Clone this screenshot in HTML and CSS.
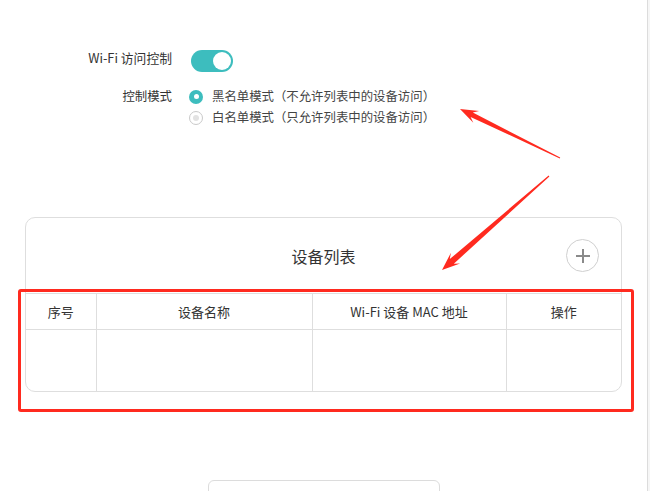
FILE: index.html
```html
<!DOCTYPE html>
<html lang="zh-CN">
<head>
<meta charset="utf-8">
<title>Wi-Fi 访问控制</title>
<link rel="stylesheet" href="styles.css">
</head>
<body>
<div class="page">
  <div class="form">
    <div class="row row-switch">
      <div class="label label-top">Wi-Fi 访问控制</div>
      <div class="control"><span class="toggle"><span class="knob"></span></span></div>
    </div>
    <div class="row row-mode">
      <div class="label">控制模式</div>
      <div class="control options">
        <div class="option"><span class="radio checked"></span><span>黑名单模式（不允许列表中的设备访问）</span></div>
        <div class="option"><span class="radio"></span><span>白名单模式（只允许列表中的设备访问）</span></div>
      </div>
    </div>
  </div>

  <div class="card">
    <div class="card-head">
      <div></div>
      <div class="card-title">设备列表</div>
      <div class="add-wrap">
        <span class="add-btn">
          <svg width="16" height="16" viewBox="0 0 16 16"><path d="M8 1v14M1 8h14" stroke="#8a8a8a" stroke-width="2" fill="none"/></svg>
        </span>
      </div>
    </div>
    <table class="dev-table">
      <colgroup>
        <col class="c1"><col class="c2"><col class="c3"><col class="c4">
      </colgroup>
      <thead>
        <tr><th>序号</th><th>设备名称</th><th>Wi-Fi 设备 MAC 地址</th><th>操作</th></tr>
      </thead>
      <tbody>
        <tr><td></td><td></td><td></td><td></td></tr>
      </tbody>
    </table>
  </div>

  <div class="bottom-wrap"><div class="bottom-box"></div></div>

  <div class="mark-rect"></div>
  <svg class="arrows" width="650" height="491" viewBox="0 0 650 491">
    <polygon fill="#ff2a1f" points="460,109 479.1,111.1 472.8,112.5 560.2,157.6 559.8,158.4 470.6,116.9 473.3,122.7"/>
    <polygon fill="#ff2a1f" points="442,270 450.9,252.8 449.8,259.1 548.6,175.5 549.4,176.5 453.8,263.7 460.1,263.4"/>
  </svg>
</div>
</body>
</html>
```

FILE: styles.css
```css
* { box-sizing: border-box; }
html, body { margin: 0; padding: 0; }
body {
  background: #f6f6f6;
  font-family: "Noto Sans CJK SC", "Noto Sans", sans-serif;
  color: #333;
  font-size: 12.4px;
}
.page {
  position: relative;
  width: 648px;
  height: 491px;
  background: #fff;
  border-right: 1px solid #dcdcdc;
  overflow: hidden;
}
.form { padding-top: 50px; }
.row { display: flex; }
.label {
  width: 172px;
  text-align: right;
  line-height: 21px;
  color: #333;
}
.label-top { line-height: 16px; font-size: 12.8px; }
.control { margin-left: 17px; }
.row-mode { margin-top: 14px; }
.toggle {
  display: block;
  margin-left: 2px;
  width: 42px;
  height: 22px;
  border-radius: 11px;
  background: #3dbdbe;
  position: relative;
}
.knob {
  position: absolute;
  right: 2px;
  top: 2px;
  width: 18px;
  height: 18px;
  border-radius: 50%;
  background: #fff;
}
.options { display: flex; flex-direction: column; }
.option {
  display: flex;
  align-items: center;
  line-height: 21px;
  color: #444;
}
.radio {
  width: 14px;
  height: 14px;
  border-radius: 50%;
  border: 1.5px solid #c9c9c9;
  background: #fff;
  margin-right: 9px;
  display: flex;
  align-items: center;
  justify-content: center;
}
.radio::after {
  content: "";
  width: 6px;
  height: 6px;
  border-radius: 50%;
  background: #e2e2e2;
}
.radio.checked {
  border: none;
  background: #3dbdbe;
}
.radio.checked::after {
  width: 5px;
  height: 5px;
  background: #fff;
}
.card {
  margin: 89px 0 0 25px;
  width: 597px;
  border: 1px solid #dedede;
  border-radius: 10px;
  overflow: hidden;
}
.card-head {
  height: 75px;
  display: grid;
  grid-template-columns: 1fr auto 1fr;
  align-items: center;
}
.card-title {
  font-size: 16px;
  color: #333;
}
.add-wrap { justify-self: end; margin-right: 22px; display: flex; }
.add-btn {
  width: 33px;
  height: 33px;
  border-radius: 50%;
  border: 1px solid #cfcfcf;
  display: flex;
  align-items: center;
  justify-content: center;
}
.dev-table {
  width: 100%;
  border-collapse: collapse;
  table-layout: fixed;
}
.c1 { width: 70px; }
.c2 { width: 216px; }
.c3 { width: 194px; }
.c4 { width: auto; }
.dev-table th {
  height: 36px;
  font-weight: normal;
  font-size: 13px;
  color: #333;
  border-top: 1px solid #dedede;
  border-bottom: 1px solid #dedede;
  padding: 0;
}
.dev-table td { height: 61px; padding: 0; }
.dev-table th + th, .dev-table td + td { border-left: 1px solid #dedede; }
.bottom-wrap {
  margin: 88px 0 0 25px;
  width: 597px;
  display: flex;
  justify-content: center;
}
.bottom-box {
  width: 232px;
  height: 40px;
  border: 1px solid #dcdcdc;
  border-radius: 6px;
}
.mark-rect {
  position: absolute;
  left: 18px;
  top: 289px;
  width: 616px;
  height: 123px;
  border: 3px solid #ff2a1f;
  border-radius: 3px;
}
.arrows {
  position: absolute;
  left: 0;
  top: 0;
  pointer-events: none;
}
```
